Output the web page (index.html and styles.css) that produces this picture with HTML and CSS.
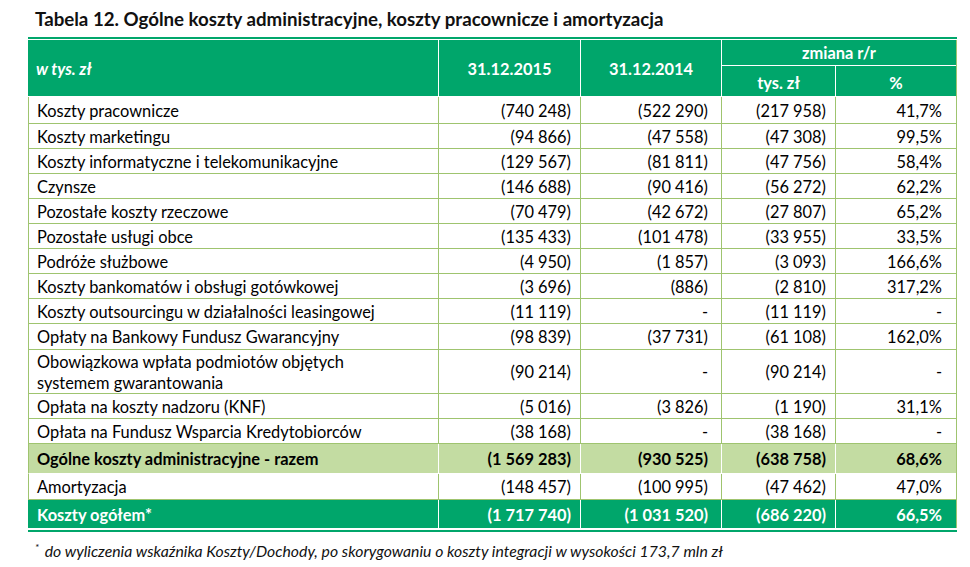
FILE: index.html
```html
<!DOCTYPE html>
<html lang="pl">
<head>
<meta charset="utf-8">
<link rel="stylesheet" href="styles.css">
</head>
<body>
<h1 class="title">Tabela 12. Ogólne koszty administracyjne, koszty pracownicze i amortyzacja</h1>
<div class="frame">
  <div class="grid">
    <div class="h hl span2">w tys. zł</div>
    <div class="h hc span2">31.12.2015</div>
    <div class="h hc span2">31.12.2014</div>
    <div class="h hc top2">zmiana r/r</div>
    <div class="h hc sub">tys. zł</div>
    <div class="h hc sub last">%</div>

    <div class="c l r1">Koszty pracownicze</div><div class="c n r1">(740 248)</div><div class="c n n3 r1">(522 290)</div><div class="c n r1">(217 958)</div><div class="c n p r1">41,7%</div>
    <div class="c l">Koszty marketingu</div><div class="c n">(94 866)</div><div class="c n n3">(47 558)</div><div class="c n">(47 308)</div><div class="c n p">99,5%</div>
    <div class="c l">Koszty informatyczne i telekomunikacyjne</div><div class="c n">(129 567)</div><div class="c n n3">(81 811)</div><div class="c n">(47 756)</div><div class="c n p">58,4%</div>
    <div class="c l">Czynsze</div><div class="c n">(146 688)</div><div class="c n n3">(90 416)</div><div class="c n">(56 272)</div><div class="c n p">62,2%</div>
    <div class="c l">Pozostałe koszty rzeczowe</div><div class="c n">(70 479)</div><div class="c n n3">(42 672)</div><div class="c n">(27 807)</div><div class="c n p">65,2%</div>
    <div class="c l">Pozostałe usługi obce</div><div class="c n">(135 433)</div><div class="c n n3">(101 478)</div><div class="c n">(33 955)</div><div class="c n p">33,5%</div>
    <div class="c l">Podróże służbowe</div><div class="c n">(4 950)</div><div class="c n n3">(1 857)</div><div class="c n">(3 093)</div><div class="c n p">166,6%</div>
    <div class="c l">Koszty bankomatów i obsługi gotówkowej</div><div class="c n">(3 696)</div><div class="c n n3">(886)</div><div class="c n">(2 810)</div><div class="c n p">317,2%</div>
    <div class="c l">Koszty outsourcingu w działalności leasingowej</div><div class="c n">(11 119)</div><div class="c n n3">-</div><div class="c n">(11 119)</div><div class="c n p">-</div>
    <div class="c l r10">Opłaty na Bankowy Fundusz Gwarancyjny</div><div class="c n r10">(98 839)</div><div class="c n n3 r10">(37 731)</div><div class="c n r10">(61 108)</div><div class="c n p r10">162,0%</div>
    <div class="c l two">Obowiązkowa wpłata podmiotów objętych<br>systemem gwarantowania</div><div class="c n two">(90 214)</div><div class="c n n3 two">-</div><div class="c n two">(90 214)</div><div class="c n p two">-</div>
    <div class="c l">Opłata na koszty nadzoru (KNF)</div><div class="c n">(5 016)</div><div class="c n n3">(3 826)</div><div class="c n">(1 190)</div><div class="c n p">31,1%</div>
    <div class="c l">Opłata na Fundusz Wsparcia Kredytobiorców</div><div class="c n">(38 168)</div><div class="c n n3">-</div><div class="c n">(38 168)</div><div class="c n p">-</div>
    <div class="c l st">Ogólne koszty administracyjne - razem</div><div class="c n st">(1 569 283)</div><div class="c n n3 st">(930 525)</div><div class="c n st">(638 758)</div><div class="c n p st">68,6%</div>
    <div class="c l am">Amortyzacja</div><div class="c n am">(148 457)</div><div class="c n n3 am">(100 995)</div><div class="c n am">(47 462)</div><div class="c n p am">47,0%</div>
    <div class="c l tot">Koszty ogółem*</div><div class="c n tot">(1 717 740)</div><div class="c n n3 tot">(1 031 520)</div><div class="c n tot">(686 220)</div><div class="c n p tot lastc">66,5%</div>
  </div>
</div>
<p class="note"><sup>*</sup> do wyliczenia wskaźnika Koszty/Dochody, po skorygowaniu o koszty integracji w wysokości 173,7 mln zł</p>
</body>
</html>
```
FILE: styles.css
```css
html, body {
  margin: 0;
  padding: 0;
  background: #fff;
}
body {
  font-family: "Lato", "Open Sans", sans-serif;
  color: #000;
  width: 970px;
  height: 567px;
  overflow: hidden;
}
.title {
  margin: 0;
  padding: 8px 0 0 35px;
  height: 29px;
  font-size: 18.7px;
  font-weight: 700;
  line-height: 23px;
  color: #111;
}
.frame {
  margin-left: 28px;
  width: 929px;
  border-top: 2px solid #00a66b;
  border-bottom: 2px solid #00a66b;
  padding: 1px 0 2px 0;
}
.grid {
  display: grid;
  grid-template-columns: 411px 142px 141px 114px 120px;
  grid-template-rows: 26px 31px 27px repeat(8, 25px) 26px 44px 25px 25px 30px 26px 28px;
  width: 928px;
  border-right: 1px solid #9fc46f;
  font-size: 16.4px;
}
.h {
  background: #00a66b;
  color: #fff;
  font-weight: 700;
  display: flex;
  align-items: center;
  box-sizing: border-box;
  border-right: 1px solid #fff;
  border-bottom: 1px solid #fff;
}
.span2 { grid-row: span 2; }
.top2 { grid-column: span 2; border-right: none; }
.hl { font-style: italic; padding-left: 8px; font-size: 16.4px; }
.hc { justify-content: center; }
.sub { padding-top: 2px; }
.last { border-right: none; }
.c {
  box-sizing: border-box;
  display: flex;
  align-items: center;
  border-right: 1px solid #9fc46f;
  border-bottom: 1px solid #9fc46f;
  white-space: nowrap;
}
.l {
  padding-left: 8px;
  border-left: 1px solid #9fc46f;
}
.n { justify-content: flex-end; padding-right: 9px; }
.n3 { padding-right: 13px; }
.p { padding-right: 14px; border-right: none; }
.two { line-height: 21px; }
.st {
  background: #c3dca2;
  font-weight: 700;
  border-bottom: 1px solid #fff;
  border-right-color: #fff;
}
.st.l { border-left-color: #9fc46f; }
.tot {
  background: #00a66b;
  color: #fff;
  font-weight: 700;
  border-right-color: #fff;
  border-left-color: #00a66b;
  border-bottom: none;
}
.tot.p { border-right: none; }
.note {
  margin: 9px 0 0 35px;
  font-size: 15.8px;
  font-style: italic;
  color: #111;
}
.note sup {
  font-size: 10px;
  vertical-align: 6px;
  margin-right: 2px;
}
```
